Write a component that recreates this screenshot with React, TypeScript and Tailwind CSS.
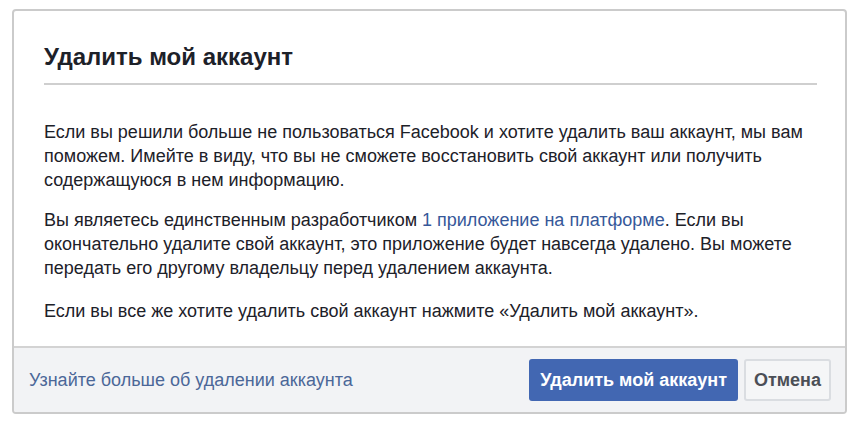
export default function App() {
  return (
    <div className="min-h-[421px] w-[858px] bg-white pl-[12px] pt-[9px] font-['Liberation_Sans',Arial,sans-serif]">
      <div className="w-[835px] overflow-hidden rounded-[4px] border-2 border-[#cbcbcb] bg-white">
        {/* Header */}
        <div className="mx-[30px] mr-[28px] border-b-2 border-[#cfcfcf] pb-[12px] pt-[32px]">
          <h1 className="text-[24px] font-bold leading-[28px] text-[#1d2129]">Удалить мой аккаунт</h1>
        </div>

        {/* Body */}
        <div className="px-[30px] pb-[23px] pt-[35px] text-[18px] leading-[24px] text-[#1d2129]">
          <p>
            Если вы решили больше не пользоваться Facebook и хотите удалить ваш аккаунт, мы вам поможем. Имейте в
            виду, что вы не сможете восстановить свой аккаунт или получить содержащуюся в нем информацию.
          </p>
          <p className="mt-[16px]">
            Вы являетесь единственным разработчиком <a className="text-[#365899]">1 приложение на платформе</a>. Если
            вы окончательно удалите свой аккаунт, это приложение будет навсегда удалено. Вы можете передать его
            другому владельцу перед удалением аккаунта.
          </p>
          <p className="mt-[19px]">Если вы все же хотите удалить свой аккаунт нажмите «Удалить мой аккаунт».</p>
        </div>

        {/* Footer */}
        <div className="flex items-center justify-between border-t-2 border-[#d3d3d3] bg-[#f2f3f5] py-[11px] pl-[15px] pr-[14px]">
          <a className="text-[18px] text-[#4b6798]">Узнайте больше об удалении аккаунта</a>
          <div className="flex gap-[6px]">
            <button className="h-[42px] rounded-[3px] bg-[#4267b2] px-[11px] text-[18px] font-bold text-white">
              Удалить мой аккаунт
            </button>
            <button className="h-[42px] rounded-[3px] border-2 border-[#dadde1] bg-[#f5f6f7] px-[8px] text-[18px] font-bold text-[#4b4f56]">
              Отмена
            </button>
          </div>
        </div>
      </div>
    </div>
  );
}
